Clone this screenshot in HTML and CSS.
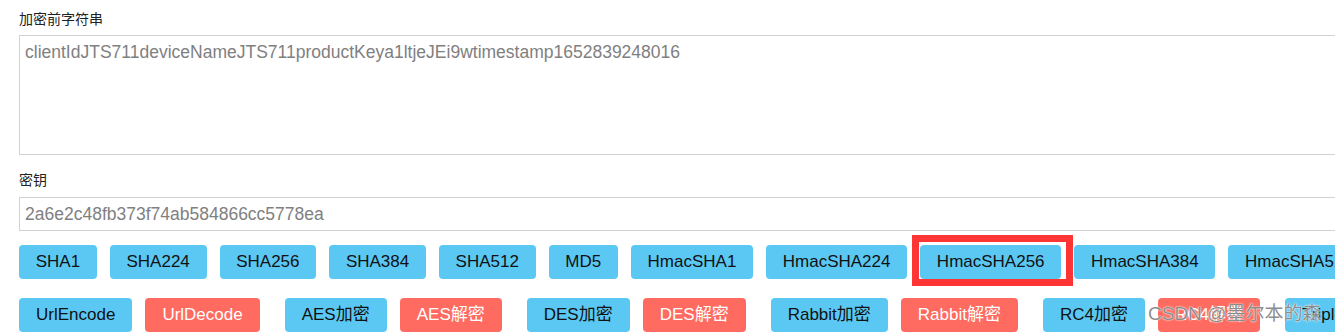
FILE: index.html
```
<!DOCTYPE html>
<html>
<head>
    <title>加密工具</title>
    <link rel="stylesheet" href="styles.css">
</head>
<body>
  <div class="page">
    <div class="form">
      <label class="field-label">加密前字符串</label>
      <textarea class="source" readonly>clientIdJTS711deviceNameJTS711productKeya1ltjeJEi9wtimestamp1652839248016</textarea>

      <label class="field-label key-label">密钥</label>
      <input class="key" type="text" value="2a6e2c48fb373f74ab584866cc5778ea" readonly/>

      <div class="row hash-row">
        <button class="btn">SHA1</button>
        <button class="btn">SHA224</button>
        <button class="btn">SHA256</button>
        <button class="btn">SHA384</button>
        <button class="btn">SHA512</button>
        <button class="btn">MD5</button>
        <button class="btn">HmacSHA1</button>
        <button class="btn">HmacSHA224</button>
        <button class="btn marked">HmacSHA256</button>
        <button class="btn">HmacSHA384</button>
        <button class="btn">HmacSHA512</button>
      </div>

      <div class="row cipher-row">
        <span class="pair">
          <button class="btn">UrlEncode</button>
          <button class="btn danger">UrlDecode</button>
        </span>
        <span class="pair">
          <button class="btn">AES加密</button>
          <button class="btn danger">AES解密</button>
        </span>
        <span class="pair">
          <button class="btn">DES加密</button>
          <button class="btn danger">DES解密</button>
        </span>
        <span class="pair">
          <button class="btn">Rabbit加密</button>
          <button class="btn danger">Rabbit解密</button>
        </span>
        <span class="pair">
          <button class="btn">RC4加密</button>
          <button class="btn danger">RC4解密</button>
        </span>
        <span class="pair">
          <button class="btn">TripleDES加密</button>
          <button class="btn danger">TripleDES解密</button>
        </span>
      </div>
    </div>
    <span class="watermark">CSDN @墨尔本的森</span>
  </div>
</body>
</html>
```

FILE: styles.css
```
body{
    margin: 0px;
    padding: 0px;
    background: #fff;
    font-family: "Liberation Sans", "Noto Sans CJK SC", sans-serif;
}

.page{
    position: relative;
    overflow: hidden;
    height: 335px;
    padding-left: 19px;
}

.form{
    width: 1500px;
    padding-top: 9px;
}

.field-label{
    display: block;
    font-size: 14px;
    line-height: 20px;
    color: #222;
    margin-bottom: 6px;
}

.key-label{
    margin-top: 15px;
    margin-bottom: 7px;
}

.source{
    display: block;
    box-sizing: border-box;
    width: 100%;
    height: 120px;
    margin: 0px;
    padding: 6px 5px;
    border: solid 1px #d2d2d2;
    font-family: "Liberation Sans", "Noto Sans CJK SC", sans-serif;
    font-size: 17.5px;
    color: #808080;
    resize: none;
    outline: none;
}

.key{
    display: block;
    box-sizing: border-box;
    width: 100%;
    height: 34px;
    margin: 0px;
    padding: 0px 5px;
    border: solid 1px #d2d2d2;
    font-family: "Liberation Sans", "Noto Sans CJK SC", sans-serif;
    font-size: 17.5px;
    color: #808080;
    outline: none;
}

.row{
    display: flex;
    flex-wrap: nowrap;
}

.hash-row{
    gap: 13px;
    margin-top: 14px;
}

.cipher-row{
    gap: 25px;
    margin-top: 19px;
}

.pair{
    display: flex;
    gap: 13px;
}

.btn{
    flex: none;
    height: 34px;
    padding: 0px 16.7px;
    border: none;
    border-radius: 4px;
    background: #5bc8f4;
    color: #111;
    font-family: "Liberation Sans", "Noto Sans CJK SC", sans-serif;
    font-size: 17px;
    line-height: 34px;
    white-space: nowrap;
}

.cipher-row .btn{
    padding: 0px 17px;
}

.btn.danger{
    background: #ff6b60;
    color: #fff;
}

.marked{
    position: relative;
}

.marked::after{
    content: "";
    position: absolute;
    top: -10px;
    left: -8px;
    right: -12px;
    bottom: -7px;
    border: solid 7px #fd3535;
}

.watermark{
    position: absolute;
    left: 1148px;
    top: 302px;
    font-size: 19px;
    line-height: 24px;
    color: rgba(120, 120, 120, 0.85);
    text-shadow: 0 0 2px #fff, 0 0 1px #fff;
    white-space: nowrap;
}
```
